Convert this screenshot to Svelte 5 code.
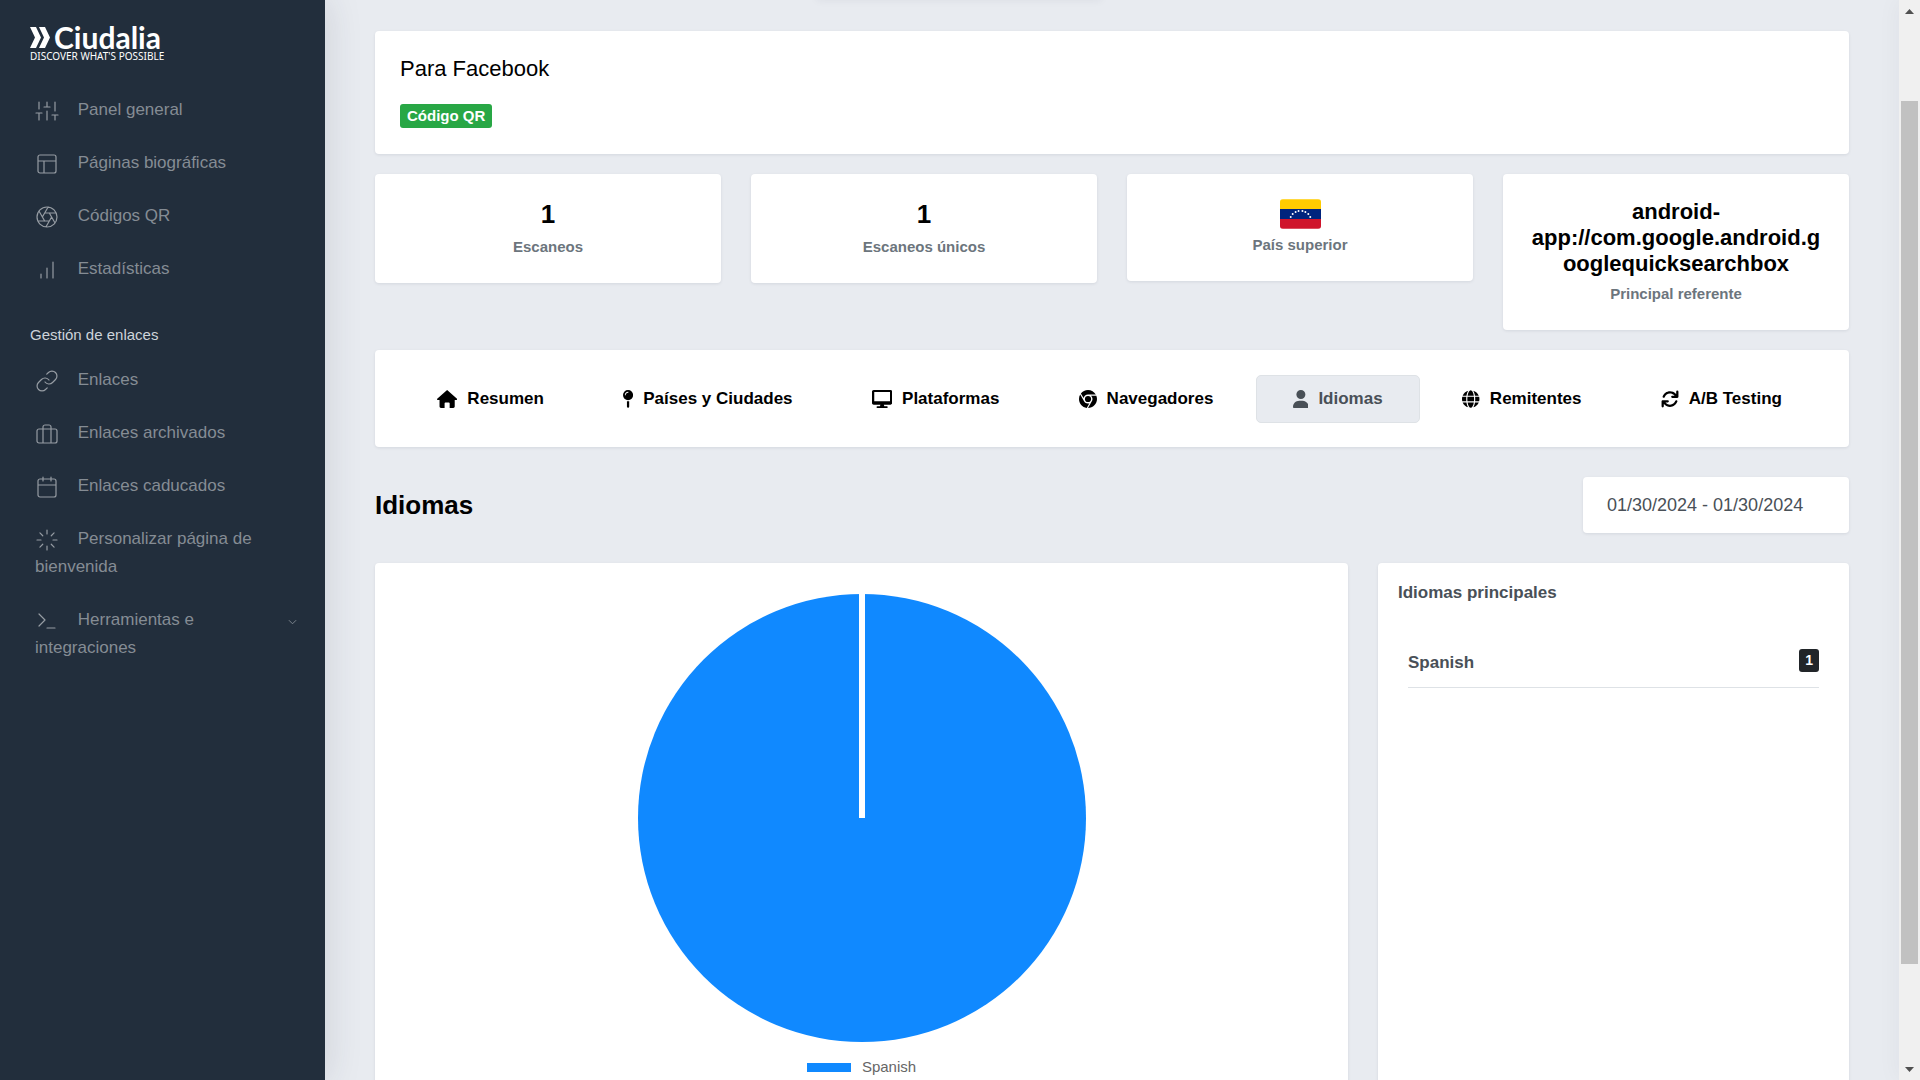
<script>
  const mainLinks = [
    { label: 'Panel general', icon: 'sliders' },
    { label: 'Páginas biográficas', icon: 'layout' },
    { label: 'Códigos QR', icon: 'aperture' },
    { label: 'Estadísticas', icon: 'bars' },
  ];

  const manageLinks = [
    { label: 'Enlaces', icon: 'link' },
    { label: 'Enlaces archivados', icon: 'briefcase' },
    { label: 'Enlaces caducados', icon: 'calendar' },
    { label: 'Personalizar página de bienvenida', icon: 'loader' },
    { label: 'Herramientas e integraciones', icon: 'terminal', more: true },
  ];

  // 24x24 outline icons
  const outline = {
    sliders: 'M4 21v-7M4 10V3M12 21v-9M12 8V3M20 21v-5M20 12V3M1 14h6M9 8h6M17 16h6',
    layout: 'M5 3h14a2 2 0 0 1 2 2v14a2 2 0 0 1-2 2H5a2 2 0 0 1-2-2V5a2 2 0 0 1 2-2zM3 9h18M9 21V9',
    aperture: 'M12 2a10 10 0 1 0 0 20 10 10 0 0 0 0-20zM14.31 8l5.74 9.94M9.69 8h11.48M7.38 12l5.74-9.94M9.69 16L3.95 6.06M14.31 16H2.83M16.62 12l-5.74 9.94',
    bars: 'M12 20V10M18 20V4M6 20v-4',
    link: 'M10 13a5 5 0 0 0 7.54.54l3-3a5 5 0 0 0-7.07-7.07l-1.72 1.71M14 11a5 5 0 0 0-7.54-.54l-3 3a5 5 0 0 0 7.07 7.07l1.71-1.71',
    briefcase: 'M4 7h16a2 2 0 0 1 2 2v10a2 2 0 0 1-2 2H4a2 2 0 0 1-2-2V9a2 2 0 0 1 2-2zM16 21V5a2 2 0 0 0-2-2h-4a2 2 0 0 0-2 2v16',
    calendar: 'M5 4h14a2 2 0 0 1 2 2v14a2 2 0 0 1-2 2H5a2 2 0 0 1-2-2V6a2 2 0 0 1 2-2zM16 2v4M8 2v4M3 10h18',
    loader: 'M12 2v4M12 18v4M4.93 4.93l2.83 2.83M16.24 16.24l2.83 2.83M2 12h4M18 12h4M4.93 19.07l2.83-2.83M16.24 7.76l2.83-2.83',
    terminal: 'M4 17l6-6-6-6M12 19h8',
  };

  const tabs = [
    { label: 'Resumen', icon: 'home', w: 576 },
    { label: 'Países y Ciudades', icon: 'pin', w: 288 },
    { label: 'Plataformas', icon: 'desktop', w: 576 },
    { label: 'Navegadores', icon: 'chrome', w: 512 },
    { label: 'Idiomas', icon: 'user', w: 448 },
    { label: 'Remitentes', icon: 'globe', w: 512 },
    { label: 'A/B Testing', icon: 'sync', w: 512 },
  ];

  const solid = {
    home: 'M288 0L6 250c-12 11-5 34 11 34h55v188c0 22 18 40 40 40h104V376c0-13 11-24 24-24h96c13 0 24 11 24 24v136h104c22 0 40-18 40-40V284h55c16 0 23-23 11-34z',
    pin: 'M112 316.9v156.8l22 33c4.8 7 15.2 7 20 0l22-33V316.9c-10.4 2-21 3.1-32 3.1s-21.600-1.200-32-3.100zM144 0a144 144 0 1 0 0 288 144 144 0 0 0 0-288zm0 76c-37.500 0-68 30.500-68 68 0 6.600-5.400 12-12 12s-12-5.400-12-12c0-50.700 41.300-92 92-92 6.600 0 12 5.400 12 12s-5.400 12-12 12z',
    desktop: 'M528 0H48C21.500 0 0 21.500 0 48v320c0 26.500 21.500 48 48 48h192l-16 48h-72c-13.300 0-24 10.700-24 24s10.700 24 24 24h272c13.300 0 24-10.700 24-24s-10.700-24-24-24h-72l-16-48h192c26.500 0 48-21.500 48-48V48c0-26.500-21.500-48-48-48zm-16 320H64V56h448v264z',
    chrome: 'M0 256c0-46.600 12.500-90.300 34.200-127.100l109.900 191.100c22 38.200 63.200 64 111.900 64 14.300 0 28.100-2.300 40.100-6.500l-76.300 132.200C95.900 492.300 0 385.300 0 256zM365.100 321.600c12-19.200 18.900-41.500 18.900-65.600 0-38.200-16.800-72.500-43.300-96h152.700c12 29.600 18.600 62.100 18.600 96 0 141.400-114.600 255.100-256 256zM477.800 128H256c-62.100 0-113.200 43.100-125.500 100.700L54.200 96.500C101 37.800 174.100 0 256 0c94.800 0 177.500 51.500 221.800 128zM168 256a88 88 0 1 1 176 0 88 88 0 0 1-176 0z',
    user: 'M224 256a128 128 0 1 0 0-256 128 128 0 0 0 0 256zm-45.700 48C79.800 304 0 383.800 0 482.300 0 498.700 13.300 512 29.700 512h388.600c16.400 0 29.700-13.300 29.700-29.700C448 383.800 368.200 304 269.700 304z',
    globe: 'M336.500 160C322 70.700 287.800 8 248 8s-74 62.700-88.500 152zM152 256c0 22.200 1.200 43.500 3.300 64h185.300c2.100-20.500 3.300-41.800 3.300-64s-1.200-43.500-3.300-64H155.300c-2.100 20.500-3.300 41.800-3.300 64zm324.700-96c-28.600-67.900-86.500-120.400-158-141.600 24.400 33.800 41.200 84.700 50 141.600zM177.200 18.400C105.800 39.600 47.800 92.100 19.300 160h108c8.700-56.900 25.500-107.800 49.900-141.600zM487.400 192H372.700c2.100 21 3.300 42.500 3.300 64s-1.200 43-3.300 64h114.600c5.500-20.500 8.600-41.800 8.600-64s-3.100-43.500-8.500-64zM120 256c0-21.500 1.200-43 3.300-64H8.600C3.200 212.500 0 233.800 0 256s3.200 43.500 8.600 64h114.600c-2-21-3.200-42.500-3.200-64zm39.500 96c14.500 89.300 48.700 152 88.500 152s74-62.700 88.500-152zm159.300 141.600c71.400-21.200 129.400-73.700 158-141.600h-108c-8.800 56.900-25.600 107.800-50 141.600zM19.300 352c28.600 67.900 86.500 120.400 158 141.600-24.400-33.800-41.200-84.700-50-141.600z',
    sync: 'M105 203c21-62 81-107 151-107 44 0 84 18 113 47l17 17h-66a32 32 0 0 0 0 64h144c18 0 32-14 32-32V48a32 32 0 0 0-64 0v67l-18-17C374 57 318 32 256 32 158 32 75 95 45 182a32 32 0 0 0 60 21zM48 288c-18 0-32 14-32 32v144a32 32 0 0 0 64 0v-67l18 17c40 41 96 66 158 66 98 0 181-63 211-150a32 32 0 0 0-60-21c-21 62-81 107-151 107-44 0-84-18-113-47l-17-17h66a32 32 0 0 0 0-64z',
  };

  const stars = [[11, 18], [13, 15], [16, 13], [19, 12], [23, 12], [26, 13], [29, 15], [31, 18]];

  let active = $state('Idiomas');
  let range = $state('01/30/2024 - 01/30/2024');
</script>

{#snippet sideLink(item)}
  <a href="#{item.icon}" class="side-link">
    {#if item.more}
      <svg class="chevron" viewBox="0 0 10 6" aria-hidden="true"><path d="M1 1l4 4 4-4" /></svg>
    {/if}
    <svg class="side-icon" viewBox="0 0 24 24" aria-hidden="true"><path d={outline[item.icon]} /></svg>
    <span>{item.label}</span>
  </a>
{/snippet}

<div class="layout">
  <nav class="sidebar">
    <a class="brand" href="#home">
      <span class="brand-row">
        <svg class="brand-mark" viewBox="0 0 20 21" aria-hidden="true">
          <path d="M0 0h6l5 10.500L6 21H0l5-10.500zM9 0h6l5 10.500L15 21H9l5-10.500z" />
        </svg>
        <span class="brand-name">Ciudalia</span>
      </span>
      <span class="brand-tag">DISCOVER WHAT'S POSSIBLE</span>
    </a>
    <div class="side-group">
      {#each mainLinks as item}
        {@render sideLink(item)}
      {/each}
    </div>
    <div class="side-header">Gestión de enlaces</div>
    <div class="side-group">
      {#each manageLinks as item}
        {@render sideLink(item)}
      {/each}
    </div>
  </nav>

  <main>
    <div class="top-shade"></div>

    <section class="card intro">
      <h1>Para Facebook</h1>
      <span class="badge green">Código QR</span>
    </section>

    <section class="stats">
      <div class="card stat">
        <strong class="number">1</strong>
        <span class="caption">Escaneos</span>
      </div>
      <div class="card stat">
        <strong class="number">1</strong>
        <span class="caption">Escaneos únicos</span>
      </div>
      <div class="card stat">
        <svg class="flag" viewBox="0 0 42 30" role="img" aria-label="Venezuela">
          <path fill="#fc0" d="M0 0h42v10H0z" />
          <path fill="#00247d" d="M0 10h42v10H0z" />
          <path fill="#cf142b" d="M0 20h42v10H0z" />
          {#each stars as [x, y]}
            <circle cx={x} cy={y} r="1" fill="#fff" />
          {/each}
        </svg>
        <span class="caption">País superior</span>
      </div>
      <div class="card stat">
        <strong class="referrer">android-app://com.google.android.googlequicksearchbox</strong>
        <span class="caption">Principal referente</span>
      </div>
    </section>

    <nav class="card tabs">
      {#each tabs as tab}
        <a href="#{tab.icon}" class="tab" class:active={active === tab.label} onclick={() => (active = tab.label)}>
          <svg class="tab-icon" viewBox="0 0 {tab.w} 512" aria-hidden="true"><path d={solid[tab.icon]} /></svg>
          {tab.label}
        </a>
      {/each}
    </nav>

    <div class="heading">
      <h2>Idiomas</h2>
      <input class="range" type="text" aria-label="Rango de fechas" bind:value={range} />
    </div>

    <section class="report">
      <div class="card chart">
        <svg class="pie" viewBox="0 0 448 448" role="img" aria-label="Spanish: 1">
          <circle cx="224" cy="224" r="224" fill="#1089ff" />
          <path d="M224 0v224" stroke="#fff" stroke-width="6" />
        </svg>
        <div class="legend"><span class="swatch"></span>Spanish</div>
      </div>
      <div class="card top-list">
        <h3>Idiomas principales</h3>
        <ul>
          <li><span>Spanish</span><span class="badge dark">1</span></li>
        </ul>
      </div>
    </section>
  </main>

  <div class="scrollbar" aria-hidden="true">
    <svg class="arrow" viewBox="0 0 9 5"><path d="M0 5l4.500-5L9 5z" /></svg>
    <div class="track"><div class="thumb"></div></div>
    <svg class="arrow" viewBox="0 0 9 5"><path d="M0 0l4.500 5L9 0z" /></svg>
  </div>
</div>

<style>
  :global(body) { margin: 0; overflow: hidden; }

  .layout {
    display: flex;
    height: 100vh;
    overflow: hidden;
    background: #e8ebf0;
    color: #495057;
    font-family: "Liberation Sans", Arial, sans-serif;
    font-size: 17px;
    line-height: 28px;
  }
  .layout *, .layout { box-sizing: border-box; }
  a { color: inherit; text-decoration: none; }
  h1, h2, h3, ul { margin: 0; padding: 0; }

  .sidebar {
    flex: none;
    width: 325px;
    background: #222e3c;
    color: #858c94;
    box-shadow: 0 0 35px rgba(41, 48, 66, 0.15);
    z-index: 1;
  }
  .brand { display: block; padding: 27px 30px 0; height: 83px; color: #fff; }
  .brand-row { display: flex; align-items: flex-start; gap: 4px; height: 22px; }
  .brand-mark { width: 20px; height: 21px; fill: #fff; }
  .brand-name { font: bold 30px/20px Lato, sans-serif; }
  .brand-tag { display: block; font: 10px/14px "Noto Sans", sans-serif; white-space: nowrap; }

  .side-link { display: block; padding: 13px 28px 12px 35px; }
  .side-icon {
    width: 24px;
    height: 24px;
    margin-right: 14px;
    vertical-align: middle;
    fill: none;
    stroke: #969ca3;
    stroke-width: 1.2;
    stroke-linecap: round;
    stroke-linejoin: round;
  }
  .chevron { float: right; width: 9px; height: 6px; margin-top: 13px; fill: none; stroke: currentColor; }
  .side-header { padding: 28px 30px 6px; color: #ced4da; font-size: 15px; line-height: 24px; }

  main { position: relative; flex: 1; min-width: 0; padding: 31px 50px 0; }
  .top-shade {
    position: absolute;
    top: -20px;
    left: 492px;
    width: 284px;
    height: 20px;
    box-shadow: 0 0 8px rgba(41, 48, 66, 0.07);
  }
  .card { background: #fff; border-radius: 4px; box-shadow: 0 1px 3px rgba(41, 48, 66, 0.1); }

  .intro { padding: 25px; height: 123px; margin-bottom: 20px; }
  .intro h1 { color: #000; font-size: 22px; font-weight: 400; line-height: 26px; margin-bottom: 22px; }
  .badge { display: block; width: max-content; border-radius: 3px; color: #fff; font-weight: 700; }
  .green { padding: 0 7px; background: #28a745; font-size: 15px; line-height: 24px; }
  .dark { padding: 0 6px; background: #212529; font-size: 14px; line-height: 23px; }

  .stats { display: grid; grid-template-columns: repeat(4, minmax(0, 1fr)); gap: 30px; align-items: start; margin-bottom: 20px; }
  .stat { display: flex; flex-direction: column; align-items: center; gap: 2px; padding: 25px 25px 22px; text-align: center; color: #000; }
  .number { font-size: 26px; line-height: 30px; margin-bottom: 2px; }
  .referrer { font-size: 22px; line-height: 26px; margin-bottom: 1px; word-break: break-word; max-width: 100%; }
  .caption { color: #6c757d; font-size: 15px; font-weight: 700; line-height: 28px; }
  .flag { width: 41px; height: 30px; border-radius: 3px; }

  .tabs { display: flex; gap: 5px; padding: 25px 30px 24px 25px; margin-bottom: 30px; }
  .tab {
    flex: 1 1 auto;
    display: flex;
    align-items: center;
    justify-content: center;
    gap: 10px;
    height: 48px;
    border: 1px solid transparent;
    border-radius: 5px;
    color: #000;
    font-weight: 700;
    white-space: nowrap;
  }
  .tab.active { background: #e8ebf0; border-color: #dee2e6; color: #495057; }
  .tab-icon { height: 18px; fill: currentColor; }

  .heading { display: flex; justify-content: space-between; align-items: center; margin-bottom: 30px; }
  .heading h2 { color: #000; font-size: 26px; line-height: 32px; }
  .range {
    width: 266px;
    height: 56px;
    padding: 0 24px;
    border: 0;
    border-radius: 4px;
    background: #fff;
    box-shadow: 0 1px 3px rgba(41, 48, 66, 0.1);
    color: #495057;
    font: inherit;
    font-size: 18px;
  }

  .report { display: grid; grid-template-columns: 973fr 471fr; gap: 30px; }
  .chart { display: flex; flex-direction: column; align-items: center; padding: 31px 25px 40px; }
  .pie { width: 448px; height: 448px; }
  .legend { display: flex; align-items: center; gap: 11px; margin-top: 11px; color: #666; font-size: 15px; }
  .swatch { width: 44px; height: 9px; background: #1089ff; }
  .top-list { padding: 16px 20px; }
  .top-list h3 { font-size: 17px; line-height: 28px; }
  .top-list ul { list-style: none; padding: 32px 10px 0; }
  .top-list li { display: flex; justify-content: space-between; align-items: flex-start; padding: 10px 0; border-bottom: 1px solid #dee2e6; font-weight: 700; }

  .scrollbar {
    flex: none;
    display: flex;
    flex-direction: column;
    align-items: center;
    width: 21px;
    padding: 9px 2px 8px;
    background: #f0f0f0;
    box-shadow: 0 0 24px rgba(41, 48, 66, 0.05);
  }
  .arrow { width: 9px; height: 5px; fill: #505050; }
  .track { flex: 1; width: 17px; padding: 87px 0 103px; }
  .thumb { height: 100%; background: #c1c1c1; }
</style>
